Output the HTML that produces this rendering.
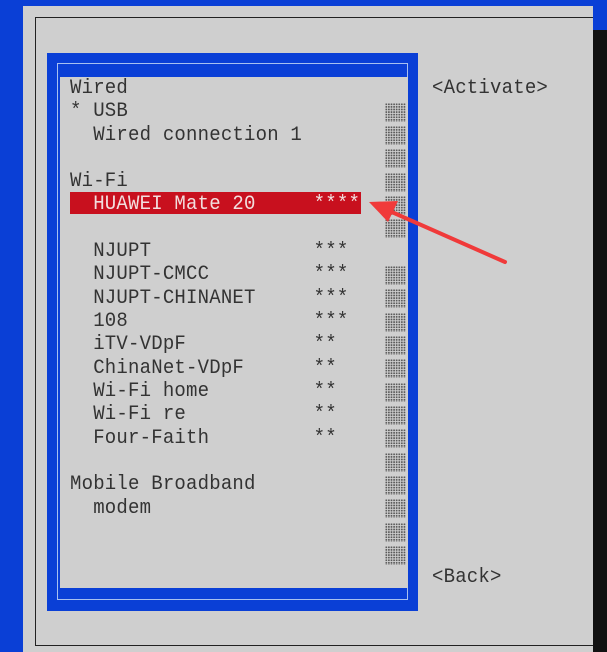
<!DOCTYPE html>
<html><head><style>
html,body{margin:0;padding:0}
body{width:607px;height:652px;background:#0a3fd6;position:relative;overflow:hidden;font-family:"Liberation Mono",monospace;}
.abs{position:absolute}
.t{position:absolute;font-size:19px;color:#333;white-space:pre;line-height:23px;letter-spacing:0.2px;transform:scaleY(1.05)}
.sb{position:absolute;left:385px;width:21px;height:19px;background-image:radial-gradient(circle,#444 0.8px,transparent 1.1px);background-size:2.6px 2.6px;opacity:.85}
</style></head><body>
<div class="abs" style="left:23px;top:6px;width:570px;height:646px;background:#cfcfcf"></div>
<div class="abs" style="left:593px;top:30px;width:14px;height:622px;background:#111"></div>
<div class="abs" style="left:35px;top:17px;width:557px;height:627px;border:1px solid #222;border-right:none"></div>
<div class="abs" style="left:47px;top:53px;width:371px;height:558px;background:#0a3fd6"></div>
<div class="abs" style="left:57px;top:63px;width:351px;height:537px;border:1px solid #a8c0f0;box-sizing:border-box"></div>
<div class="abs" style="left:60px;top:77px;width:348px;height:511px;background:#cfcfcf"></div>
<div class="abs" style="left:70px;top:192px;width:291px;height:22px;background:#c8101e"></div>
<div class="t" style="left:70px;top:77px">Wired</div>
<div class="t" style="left:70px;top:100px">* USB</div>
<div class="t" style="left:70px;top:124px">  Wired connection 1</div>
<div class="t" style="left:70px;top:170px">Wi-Fi</div>
<div class="t" style="left:70px;top:193px;color:#f2dede">  HUAWEI Mate 20     ****</div>
<div class="t" style="left:70px;top:240px">  NJUPT              ***</div>
<div class="t" style="left:70px;top:263px">  NJUPT-CMCC         ***</div>
<div class="t" style="left:70px;top:287px">  NJUPT-CHINANET     ***</div>
<div class="t" style="left:70px;top:310px">  108                ***</div>
<div class="t" style="left:70px;top:333px">  iTV-VDpF           **</div>
<div class="t" style="left:70px;top:357px">  ChinaNet-VDpF      **</div>
<div class="t" style="left:70px;top:380px">  Wi-Fi home         **</div>
<div class="t" style="left:70px;top:403px">  Wi-Fi re           **</div>
<div class="t" style="left:70px;top:427px">  Four-Faith         **</div>
<div class="t" style="left:70px;top:473px">Mobile Broadband</div>
<div class="t" style="left:70px;top:497px">  modem</div>
<div class="t" style="left:432px;top:77px">&lt;Activate&gt;</div>
<div class="t" style="left:432px;top:566px">&lt;Back&gt;</div>
<div class="sb" style="top:103px"></div><div class="sb" style="top:126px"></div><div class="sb" style="top:149px"></div><div class="sb" style="top:173px"></div><div class="sb" style="top:196px"></div><div class="sb" style="top:219px"></div>
<div class="sb" style="top:266px"></div><div class="sb" style="top:289px"></div><div class="sb" style="top:313px"></div><div class="sb" style="top:336px"></div><div class="sb" style="top:359px"></div><div class="sb" style="top:383px"></div><div class="sb" style="top:406px"></div><div class="sb" style="top:429px"></div><div class="sb" style="top:453px"></div><div class="sb" style="top:476px"></div><div class="sb" style="top:499px"></div><div class="sb" style="top:523px"></div><div class="sb" style="top:546px"></div>
<svg class="abs" style="left:0;top:0" width="607" height="652">
<line x1="505" y1="262" x2="385" y2="209" stroke="#f03a3a" stroke-width="4" stroke-linecap="round"/>
<polygon points="369,202 398,201 388,222" fill="#f03a3a"/>
</svg>
</body></html>
